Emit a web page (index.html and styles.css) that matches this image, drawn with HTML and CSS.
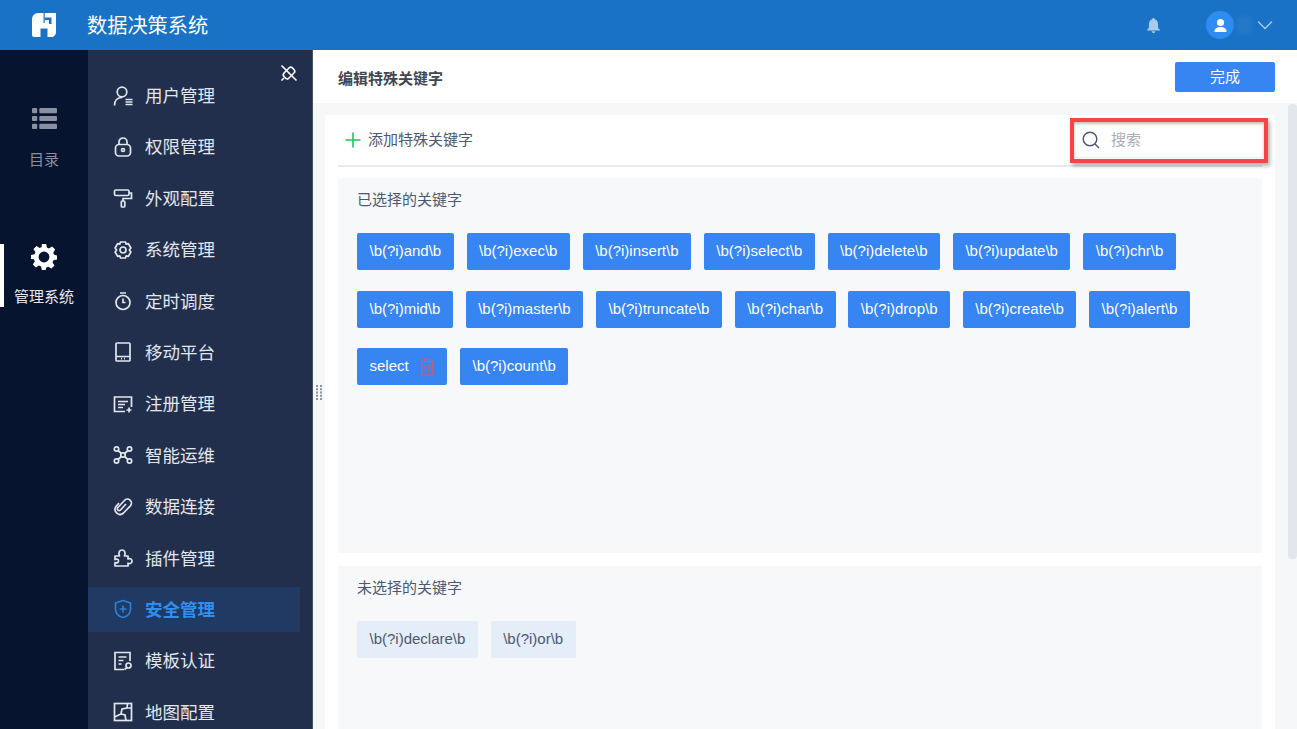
FILE: index.html
```html
<!DOCTYPE html>
<html lang="zh-CN">
<head>
    <meta charset="UTF-8">
    <meta name="viewport" content="width=device-width, initial-scale=1.0">
    <title>数据决策系统</title>
    <link rel="stylesheet" href="styles.css">
</head>
<body>
    <header class="topbar">
        <svg class="logo" viewBox="0 0 24 24"><path fill="#fff" d="M6 0H24V18a6 6 0 0 1-3 6H15.500V15.500H8.500V24H2a2 2 0 0 1-2-2V6a6 6 0 0 1 6-6z"/><path fill="#1a72c6" d="M12.500 4.500H19.500V11H17V7H12.500z"/><path fill="#1a72c6" d="M11.500 0h1.200v10h-1.200z"/></svg>
        <div class="app-name">数据决策系统</div>
        <svg class="bell" viewBox="0 0 16 16" fill="#a9cbeb"><path d="M8 1a1.200 1.200 0 0 1 1.200 1.200C11.500 3 12.300 5 12.300 7v3l1.700 2v.600H2V12l1.700-2V7c0-2 .8-4 3.100-4.800A1.200 1.200 0 0 1 8 1z"/><path d="M6.300 13.500h3.400a1.700 1.700 0 0 1-3.400 0z"/></svg>
        <div class="avatar">
            <svg viewBox="0 0 16 16" fill="#fff"><circle cx="8" cy="4.800" r="3.800"/><path d="M1.500 15c0-4 2.500-5.500 6.500-5.500s6.500 1.500 6.500 5.500z"/></svg>
        </div>
        <div class="user-blur"></div>
        <svg class="caret" viewBox="0 0 16 10" fill="none" stroke="#a9cbeb" stroke-width="1.300"><path d="M1 1.500l7 7 7-7"/></svg>
    </header>

    <div class="layout">
        <nav class="rail">
            <div class="rail-item catalog">
                <svg viewBox="0 0 24 20" fill="#8b90a0"><rect x="0" y="0" width="5" height="5" rx="1"/><rect x="7" y="0" width="17" height="5" rx="1"/><rect x="0" y="7.500" width="5" height="5" rx="1"/><rect x="7" y="7.500" width="17" height="5" rx="1"/><rect x="0" y="15" width="5" height="5" rx="1"/><rect x="7" y="15" width="17" height="5" rx="1"/></svg>
                <span>目录</span>
            </div>
            <div class="rail-item manage">
                <svg viewBox="0 0 24 24" fill="#fff"><path fill-rule="evenodd" d="M10 0h4l.7 3.300 1.900.8L19.500 2.300l2.800 2.800-1.800 2.900.8 1.900L24 10.600v3.800l-3.300.7-.8 1.900 1.800 2.900-2.800 2.800-2.900-1.800-1.900.8L13.500 24h-3.500l-.7-3.300-1.900-.8-2.900 1.800-2.800-2.800 1.800-2.900-.8-1.900L0 13.900v-3.800l3.300-.7.8-1.900L2.300 4.600l2.800-2.800L8 3.600l1.900-.8zM12 7a5 5 0 1 0 0 10 5 5 0 0 0 0-10z"/></svg>
                <span>管理系统</span>
            </div>
        </nav>

        <aside class="menu">
            <svg class="pin" viewBox="0 0 18 18" fill="none" stroke="#fff" stroke-width="1.600"><rect x="3" y="5.500" width="12" height="7" rx="2.500" transform="rotate(-45 9 9)"/><path d="M1.500 1.500l15 15M1.500 16.500l2.500-2.500"/></svg>
            <ul class="menu-list">
                <li class="menu-item">
                    <svg viewBox="0 0 20 20"><circle cx="9" cy="6" r="4.800"/><path d="M1.500 19.500c0-5 3-8 7.500-8M12.500 13.500H19.500M12.500 16H19.500M12.500 18.500H19.500"/></svg>
                    <span>用户管理</span>
                </li>
                <li class="menu-item">
                    <svg viewBox="0 0 20 20"><rect x="2.500" y="7.500" width="15" height="11.500" rx="3.500"/><path d="M6 7.500V5a4 4 0 0 1 8 0v2.500"/><circle cx="10" cy="13" r="1.500"/></svg>
                    <span>权限管理</span>
                </li>
                <li class="menu-item">
                    <svg viewBox="0 0 20 20"><rect x="1.500" y="2" width="14.500" height="5.500" rx="1.500"/><path d="M16 5h2.500v5.500H10V13"/><rect x="8.300" y="13" width="3.500" height="6" rx="1"/></svg>
                    <span>外观配置</span>
                </li>
                <li class="menu-item">
                    <svg viewBox="0 0 20 20"><path d="M7.500 2h5l.7 2.200 2.200-.5 2.500 4.300L16.300 10l1.600 2-2.500 4.300-2.200-.5-.7 2.200h-5l-.7-2.200-2.200.5L2.100 12l1.600-2-1.600-2 2.500-4.300 2.200.5z" stroke-linejoin="round"/><circle cx="10" cy="10" r="3"/></svg>
                    <span>系统管理</span>
                </li>
                <li class="menu-item">
                    <svg viewBox="0 0 20 20"><circle cx="10" cy="11.500" r="7"/><path d="M7 2h6M10 7.500v4h2.500"/></svg>
                    <span>定时调度</span>
                </li>
                <li class="menu-item">
                    <svg viewBox="0 0 20 20"><rect x="3" y="1" width="14" height="18" rx="1"/><path d="M3 14.500h14M8 16.700h1M11 16.700h1"/></svg>
                    <span>移动平台</span>
                </li>
                <li class="menu-item">
                    <svg viewBox="0 0 20 20"><path d="M12 17.500H1.500V3h17v10"/><path d="M5 7.500h10M5 10.500h7M5 13.500h5M13.500 16h5M16 13.500v5"/></svg>
                    <span>注册管理</span>
                </li>
                <li class="menu-item">
                    <svg viewBox="0 0 20 20"><circle cx="3.500" cy="4" r="2.200"/><circle cx="16.500" cy="4" r="2.200"/><circle cx="3.500" cy="16" r="2.200"/><circle cx="16.500" cy="16" r="2.200"/><circle cx="10" cy="10" r="2.200"/><path d="M5 5.500l3.400 3M15 5.500l-3.400 3M5 14.500l3.400-3M15 14.500l-3.400-3"/></svg>
                    <span>智能运维</span>
                </li>
                <li class="menu-item">
                    <svg viewBox="0 0 20 20"><path d="M13 7l-5.500 6a1.800 1.800 0 0 1-2.600-2.500l6.500-7a4 4 0 0 1 6 5.300L10.500 16a5 5 0 0 1-7.500-6.500L6 6"/></svg>
                    <span>数据连接</span>
                </li>
                <li class="menu-item">
                    <svg viewBox="0 0 20 20"><path d="M2 8h4.500C5 5 6.500 2 9 2s4 3 2.500 6H15v3c3-1 4 .8 4 2.200s-1.500 3-4 2V18H2v-3.500c2 1 3.500 0 3.500-1.500S4 10.500 2 11.500z" stroke-linejoin="round"/></svg>
                    <span>插件管理</span>
                </li>
                <li class="menu-item active">
                    <svg viewBox="0 0 20 20"><path d="M10 1.500l7.500 2.500v6c0 4.500-3.500 7.500-7.500 8.500-4-1-7.500-4-7.500-8.500V4z" stroke-linejoin="round"/><path d="M6.500 10h7M10 6.500v7"/></svg>
                    <span>安全管理</span>
                </li>
                <li class="menu-item">
                    <svg viewBox="0 0 20 20"><path d="M11 18.500H2V1.500h15V10"/><path d="M5.500 6h8M5.500 9.500h5M5.500 13h3"/><circle cx="15.500" cy="14.500" r="2.500"/><path d="M14 16.500l-2.500 2"/></svg>
                    <span>模板认证</span>
                </li>
                <li class="menu-item">
                    <svg viewBox="0 0 20 20"><rect x="1.500" y="1.500" width="17" height="17"/><path d="M1.500 15l6.500-3 1-5 5-1 .5-4.500M8 12l4 1 1 5.500M14.500 6h4"/></svg>
                    <span>地图配置</span>
                </li>
            </ul>
        </aside>

        <main class="main">
            <div class="edit-bar">
                <h2 class="edit-title">编辑特殊关键字</h2>
                <button class="done-btn">完成</button>
            </div>
            <div class="splitter">
                <svg viewBox="0 0 6 15" fill="#8a93a3"><rect x="0" y="0" width="2" height="2"/><rect x="4" y="0" width="2" height="2"/><rect x="0" y="3.250" width="2" height="2"/><rect x="4" y="3.250" width="2" height="2"/><rect x="0" y="6.500" width="2" height="2"/><rect x="4" y="6.500" width="2" height="2"/><rect x="0" y="9.750" width="2" height="2"/><rect x="4" y="9.750" width="2" height="2"/><rect x="0" y="13" width="2" height="2"/><rect x="4" y="13" width="2" height="2"/></svg>
            </div>
            <div class="scroll-thumb"></div>
            <section class="card">
                <div class="toolbar">
                    <div class="add-btn">
                        <svg viewBox="0 0 16 16" stroke="#22c55e" stroke-width="1.600"><path d="M8 .5v15M.5 8h15"/></svg>
                        <span>添加特殊关键字</span>
                    </div>
                    <div class="search">
                        <svg viewBox="0 0 18 18" fill="none" stroke="#4c5872" stroke-width="1.500"><circle cx="8" cy="8" r="6.800"/><path d="M13 13l4 4"/></svg>
                        <span>搜索</span>
                    </div>
                </div>
                <div class="panel selected">
                    <h3 class="panel-title">已选择的关键字</h3>
                    <div class="tags">
                        <div class="tag">\b(?i)and\b</div>
                        <div class="tag">\b(?i)exec\b</div>
                        <div class="tag">\b(?i)insert\b</div>
                        <div class="tag">\b(?i)select\b</div>
                        <div class="tag">\b(?i)delete\b</div>
                        <div class="tag">\b(?i)update\b</div>
                        <div class="tag">\b(?i)chr\b</div>
                        <div class="tag">\b(?i)mid\b</div>
                        <div class="tag">\b(?i)master\b</div>
                        <div class="tag">\b(?i)truncate\b</div>
                        <div class="tag">\b(?i)char\b</div>
                        <div class="tag">\b(?i)drop\b</div>
                        <div class="tag">\b(?i)create\b</div>
                        <div class="tag">\b(?i)alert\b</div>
                        <div class="tag">select
                            <svg class="trash" viewBox="0 0 16 18" fill="none" stroke="#e0575f" stroke-width="1.200"><path d="M1 3.500h14M5.500 3.500V1h5v2.500M2.800 3.500v13.500h10.400V3.500M6.200 6.500v8M9.800 6.500v8"/></svg>
                        </div>
                        <div class="tag">\b(?i)count\b</div>
                    </div>
                </div>
                <div class="panel unselected">
                    <h3 class="panel-title">未选择的关键字</h3>
                    <div class="tags">
                        <div class="tag off">\b(?i)declare\b</div>
                        <div class="tag off">\b(?i)or\b</div>
                    </div>
                </div>
            </section>
        </main>
    </div>

    <div class="callout"></div>
</body>
</html>
```

FILE: styles.css
```css
* {
    box-sizing: border-box;
}

html, body {
    height: 100%;
}

body {
    margin: 0;
    overflow: hidden;
    font-family: "Liberation Sans", "Noto Sans CJK SC", sans-serif;
    background: #f5f7f9;
    color: #4c5872;
}

.topbar {
    display: flex;
    align-items: center;
    height: 50px;
    padding-left: 32px;
    background: #1a72c6;
}

.logo {
    width: 24px;
    height: 24px;
}

.app-name {
    margin-left: 31px;
    padding-bottom: 2px;
    font-size: 20.200px;
    color: #fff;
}

.bell {
    width: 17px;
    height: 17px;
    margin-left: auto;
}

.avatar {
    display: flex;
    justify-content: center;
    align-items: center;
    width: 28px;
    height: 28px;
    margin-left: 44px;
    border-radius: 50%;
    background: #2f8cf0;
}

.avatar svg {
    width: 15px;
    height: 15px;
}

.user-blur {
    width: 16px;
    height: 18px;
    margin-left: 2px;
    background: #2478c9;
    filter: blur(2px);
}

.caret {
    width: 16px;
    height: 10px;
    margin: 0 24px 0 5px;
}

.layout {
    display: flex;
    height: 679px;
    overflow: hidden;
}

.rail {
    flex: 0 0 88px;
    background: #07142f;
}

.rail-item {
    display: flex;
    flex-direction: column;
    align-items: center;
    width: 88px;
    font-size: 15px;
}

.rail-item.catalog {
    padding-top: 58px;
    color: #8b90a0;
}

.rail-item.catalog svg {
    width: 25px;
    height: 21px;
    margin-bottom: 19px;
}

.rail-item.manage {
    height: 63px;
    margin-top: 75px;
    border-left: 4px solid #fff;
    padding-right: 4px;
    color: #e6e8ee;
}

.rail-item.manage svg {
    width: 26px;
    height: 26px;
    margin-bottom: 15px;
}

.menu {
    position: relative;
    flex: 0 0 225px;
    background: #212f4d;
    border-right: 1px solid #46526a;
}

.pin {
    position: absolute;
    top: 14px;
    right: 14px;
    width: 18px;
    height: 18px;
}

.menu-list {
    list-style: none;
    margin: 0;
    padding: 23px 0 0;
}

.menu-item {
    display: flex;
    align-items: center;
    gap: 12px;
    width: 212px;
    height: 45px;
    margin-bottom: 6.4px;
    padding-left: 25px;
    font-size: 17.500px;
    color: #e3e6ec;
}

.menu-item span {
    padding-bottom: 2px;
}

.menu-item svg {
    flex: none;
    width: 20px;
    height: 20px;
    fill: none;
    stroke: #e3e6ec;
    stroke-width: 1.700;
}

.menu-item.active {
    background: #203a63;
    color: #2f8ff0;
    font-weight: bold;
}

.menu-item.active svg {
    stroke: #2a7fd6;
}

.main {
    position: relative;
    flex: 1;
    min-width: 0;
}

.edit-bar {
    display: flex;
    justify-content: space-between;
    align-items: center;
    height: 53px;
    padding: 0 22px 0 25px;
    background: #fff;
}

.edit-title {
    margin: 2px 0 0;
    font-size: 15px;
    font-weight: bold;
    color: #3f4652;
}

.done-btn {
    width: 100px;
    height: 30px;
    padding: 0 0 2px;
    border: none;
    border-radius: 2px;
    background: #3685f2;
    color: #fff;
    font-family: inherit;
    font-size: 15px;
}

.splitter {
    position: absolute;
    left: 3px;
    top: 335px;
    width: 6px;
    height: 15px;
}

.splitter svg {
    display: block;
    width: 6px;
    height: 15px;
}

.scroll-thumb {
    position: absolute;
    top: 54px;
    right: 0;
    width: 9px;
    height: 455px;
    border-radius: 4px;
    background: #e3e6ea;
}

.card {
    height: 640px;
    margin: 12px 22px 0 12px;
    padding: 0 13px;
    background: #fff;
}

.toolbar {
    display: flex;
    justify-content: space-between;
    align-items: center;
    height: 52px;
    border-bottom: 2px solid #e8eaee;
}

.add-btn {
    display: flex;
    align-items: center;
    gap: 7px;
    padding-left: 7px;
    font-size: 15px;
}

.add-btn svg {
    width: 16px;
    height: 16px;
}

.add-btn span {
    padding-bottom: 3px;
}

.search span {
    padding-bottom: 2px;
}

.search {
    display: flex;
    align-items: center;
    gap: 11px;
    width: 190px;
    height: 36px;
    padding-left: 10px;
    font-size: 15px;
    color: #a9aeb9;
    border-bottom: 1px solid #e8eaee;
}

.search svg {
    width: 18px;
    height: 18px;
}

.panel {
    padding: 12px 19px 0;
    background: #f7f8fa;
}

.panel.selected {
    height: 375px;
    margin-top: 11px;
}

.panel.unselected {
    height: 240px;
    margin-top: 13px;
}

.panel-title {
    margin: 0 0 23px;
    font-size: 15px;
    font-weight: normal;
    line-height: 20px;
}

.tags {
    display: flex;
    flex-wrap: wrap;
    gap: 20.500px 12.800px;
}

.tag {
    display: flex;
    align-items: center;
    height: 37px;
    padding: 0 12.500px 2px;
    border-radius: 2px;
    background: #3685f2;
    color: #fff;
    font-size: 15px;
}

.tag.off {
    background: #e4edf8;
    color: #4c5872;
}

.trash {
    width: 16px;
    height: 18px;
    margin: 2px 0 0 10px;
}

.callout {
    position: absolute;
    left: 1070px;
    top: 118px;
    width: 198px;
    height: 45px;
    border: 4px solid #f84444;
    box-shadow: 2px 3px 4px rgba(0, 0, 0, 0.3), inset 0 2px 3px rgba(0, 0, 0, 0.25);
}
```
